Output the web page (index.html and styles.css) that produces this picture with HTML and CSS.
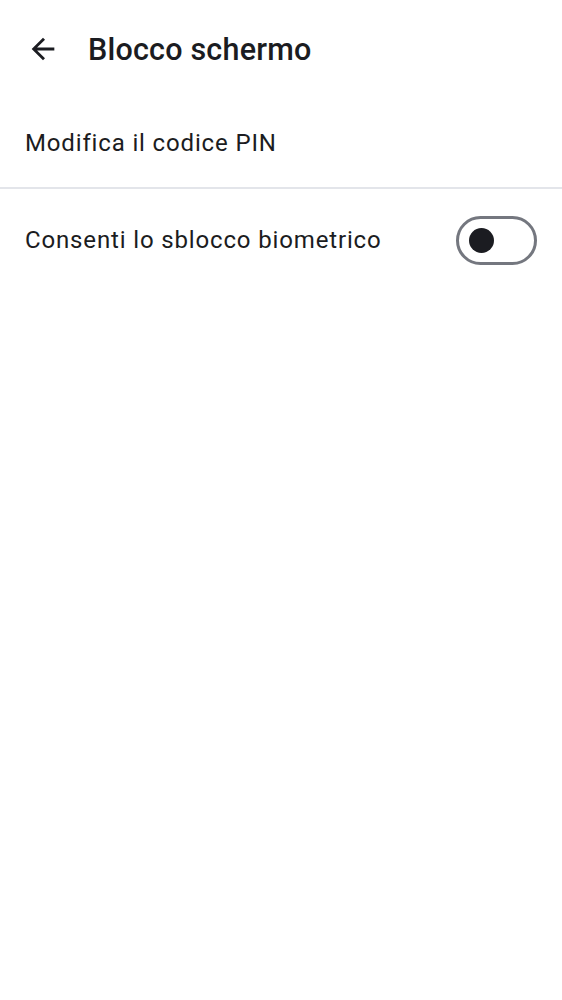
FILE: index.html
```html
<!DOCTYPE html>
<html lang="it">
<head>
<meta charset="utf-8">
<title>Blocco schermo</title>
<link rel="stylesheet" href="styles.css">
</head>
<body>
<div class="screen">
  <header class="appbar">
    <button class="back" aria-label="Indietro">
      <svg viewBox="0 0 24 24" width="34" height="34"><path d="M20 11H7.83l5.59-5.59L12 4l-8 8 8 8 1.41-1.41L7.83 13H20v-2z" fill="#1b1c21"/></svg>
    </button>
    <h1 class="title">Blocco schermo</h1>
  </header>
  <div class="row row-pin">Modifica il codice PIN</div>
  <div class="divider"></div>
  <div class="row row-bio">
    <span class="label">Consenti lo sblocco biometrico</span>
    <span class="switch"><span class="knob"></span></span>
  </div>
</div>
</body>
</html>
```
FILE: styles.css
```css
html, body {
  margin: 0;
  padding: 0;
  background: #ffffff;
}
body {
  font-family: Roboto, "Noto Sans", sans-serif;
  color: #1b1c21;
}
.screen {
  width: 562px;
  min-height: 1000px;
}
.appbar {
  height: 98px;
  display: flex;
  align-items: center;
  padding-left: 26px;
  box-sizing: border-box;
}
.back {
  width: 34px;
  height: 34px;
  padding: 0;
  margin: 0;
  border: none;
  background: none;
  display: flex;
  align-items: center;
  justify-content: center;
}
.back svg {
  display: block;
}
.title {
  margin: 0 0 0 28px;
  font-size: 30.5px;
  font-weight: 500;
  letter-spacing: 0.2px;
  color: #1b1c21;
}
.row {
  display: flex;
  align-items: center;
  padding: 0 25px;
  font-size: 24px;
  letter-spacing: 0.85px;
  color: #1b1c21;
}
.row-pin {
  height: 89px;
}
.divider {
  height: 2px;
  background: #e3e5ea;
}
.row-bio {
  height: 102px;
  justify-content: space-between;
}
.switch {
  width: 81px;
  height: 49px;
  box-sizing: border-box;
  border: 3px solid #74777f;
  border-radius: 25px;
  display: flex;
  align-items: center;
  padding-left: 10px;
}
.knob {
  width: 25px;
  height: 25px;
  border-radius: 50%;
  background: #1b1c21;
}
```
